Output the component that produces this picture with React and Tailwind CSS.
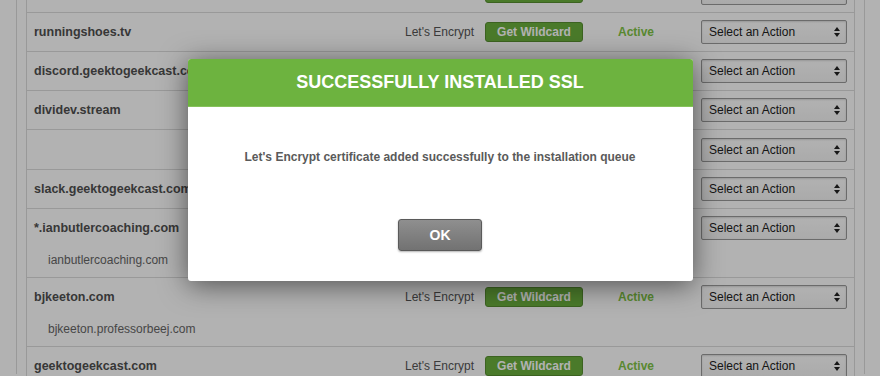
import React from "react";

const rows = [
  { name: "", cert: true },
  { name: "runningshoes.tv", cert: true },
  { name: "discord.geektogeekcast.com", cert: true },
  { name: "dividev.stream", cert: true },
  { name: "", cert: false, tall: true },
  { name: "slack.geektogeekcast.com", cert: true },
  { name: "*.ianbutlercoaching.com", sub: "ianbutlercoaching.com", cert: true },
  { name: "bjkeeton.com", sub: "bjkeeton.professorbeej.com", cert: true },
  { name: "geektogeekcast.com", cert: true },
];

function SelectArrows() {
  return (
    <svg width="6" height="10" viewBox="0 0 6 10" aria-hidden="true">
      <path d="M3 0 L6 4 L0 4 Z" fill="#222" />
      <path d="M3 10 L6 6 L0 6 Z" fill="#222" />
    </svg>
  );
}

function ActionSelect() {
  return (
    <div className="ml-[12px] w-[146px] h-[24px] flex items-center justify-between pl-[7px] pr-[6px] border border-[#9a9a9a] rounded-[2px] bg-gradient-to-b from-white to-[#f4f4f4] shadow-[inset_0_1px_2px_rgba(0,0,0,0.15)] text-[12px] text-[#222]">
      <span>Select an Action</span>
      <SelectArrows />
    </div>
  );
}

function DomainRow({ row }) {
  return (
    <div className="border-b border-[#dcdcdc]">
      <div className={`${row.tall ? "h-[39px]" : "h-[38px]"} flex items-center pl-[7px] pr-[7px]`}>
        <span className="flex-1 text-[12.5px] font-bold text-[#505050] whitespace-nowrap">{row.name}</span>
        {row.cert && (
          <>
            <span className="text-[12px] text-[#555]">Let's Encrypt</span>
            <button className="ml-[11px] w-[98px] h-[20px] rounded-[3px] bg-[#6aaf3d] border border-[#568f30] text-white text-[12px] font-bold leading-none">
              Get Wildcard
            </button>
            <span className="w-[106px] text-center text-[12px] font-bold text-[#7fc446]">Active</span>
          </>
        )}
        <ActionSelect />
      </div>
      {row.sub && (
        <div className="h-[30px] pl-[21px] pb-[4px] flex items-center text-[12px] text-[#666]">{row.sub}</div>
      )}
    </div>
  );
}

export default function App() {
  return (
    <div className="relative w-[880px] h-[376px] overflow-hidden bg-white font-['Liberation_Sans',Arial,sans-serif]">
      <div className="ml-[16px] w-[849px] h-[400px] border-x border-[#dcdcdc] px-[9px]">
        <div className="-mt-[26px] border-x border-[#dcdcdc]">
          {rows.map((row, i) => (
            <DomainRow key={i} row={row} />
          ))}
        </div>
      </div>

      {/* modal overlay */}
      <div className="absolute inset-0 bg-black/30 flex justify-center pt-[59px]">
        <div className="w-[505px] h-[222px] bg-white rounded-[3px] overflow-hidden shadow-[0_4px_28px_rgba(0,0,0,0.55)] flex flex-col">
          <div className="h-[48px] bg-[#6db33f] border-b border-[#86c25c] flex items-center justify-center">
            <h2 className="text-[18px] font-bold text-white">SUCCESSFULLY INSTALLED SSL</h2>
          </div>
          <div className="flex-1 flex flex-col items-center pt-[42px]">
            <p className="text-[12px] leading-[16px] font-bold text-[#5a5a5a]">
              Let's Encrypt certificate added successfully to the installation queue
            </p>
            <button className="mt-[54px] w-[84px] h-[32px] rounded-[3px] border border-[#5a5a5a] bg-gradient-to-b from-[#8f8f8f] to-[#727272] shadow-[0_1px_2px_rgba(0,0,0,0.3)] text-white text-[14px] font-bold">
              OK
            </button>
          </div>
        </div>
      </div>
    </div>
  );
}
